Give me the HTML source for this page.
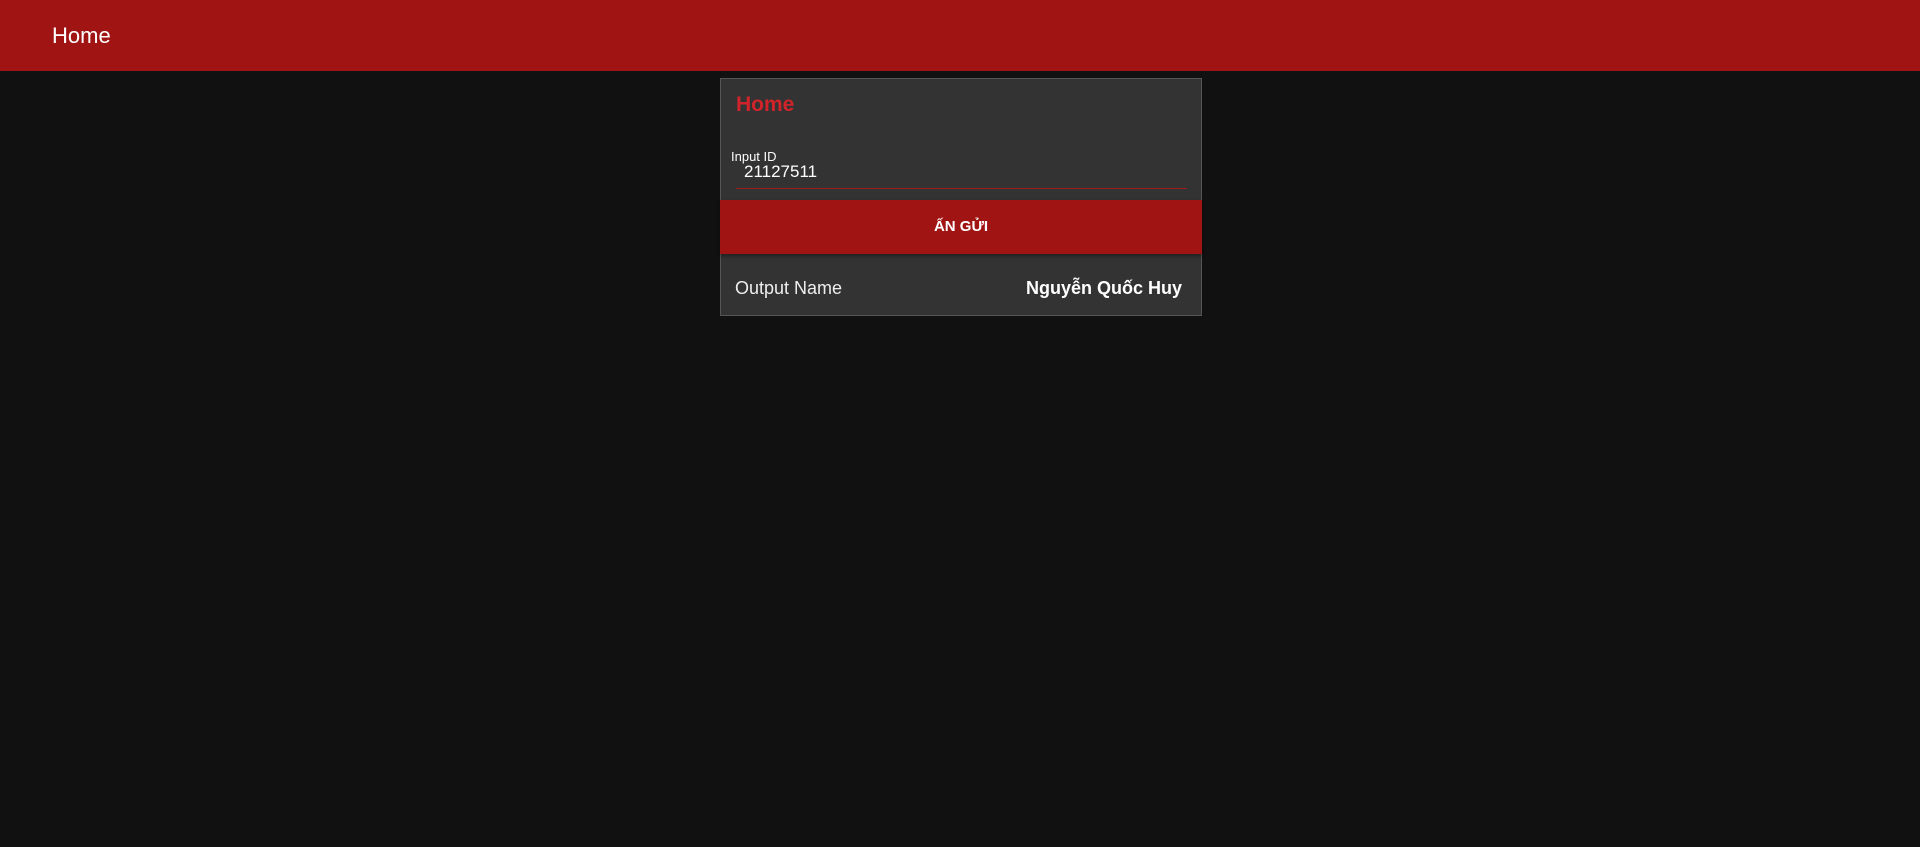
<!DOCTYPE html>
<html><head><meta charset="utf-8"><style>
*{margin:0;padding:0;box-sizing:border-box}
body{width:1920px;height:847px;background:#111;font-family:"Segoe UI","Liberation Sans","DejaVu Sans",sans-serif;overflow:hidden;position:relative}
.hdr{position:absolute;left:0;top:0;width:1920px;height:71px;background:#a01414}
.hdr span{position:absolute;left:52px;top:23px;font-size:22px;color:#fff}
.card{position:absolute;left:720px;top:78px;width:482px;height:238px;background:#333;border:1px solid #555}
.t{position:absolute;left:15px;top:14px;font-size:21px;font-weight:bold;color:#d0242a}
.lbl{position:absolute;left:10px;top:70px;font-size:13px;color:#fff}
.val{position:absolute;left:23px;top:83px;font-size:17px;color:#fff}
.ul{position:absolute;left:15px;top:109px;width:451px;height:1px;background:#9b1c1c}
.btn{position:absolute;left:-1px;top:121px;width:482px;height:54px;background:#a01414;color:#fff;font-weight:bold;font-size:15px;text-align:center;line-height:54px;box-shadow:0 2px 4px rgba(0,0,0,.4)}
.on{position:absolute;left:14px;top:199px;font-size:18px;color:#eee}
.nm{position:absolute;right:19px;top:199px;font-size:18px;font-weight:bold;color:#fff}
</style></head><body>
<div class="hdr"><span>Home</span></div>
<div class="card">
<div class="t">Home</div>
<div class="lbl">Input ID</div>
<div class="val">21127511</div>
<div class="ul"></div>
<div class="btn">ẤN GỬI</div>
<div class="on">Output Name</div>
<div class="nm">Nguyễn Quốc Huy</div>
</div>
</body></html>
